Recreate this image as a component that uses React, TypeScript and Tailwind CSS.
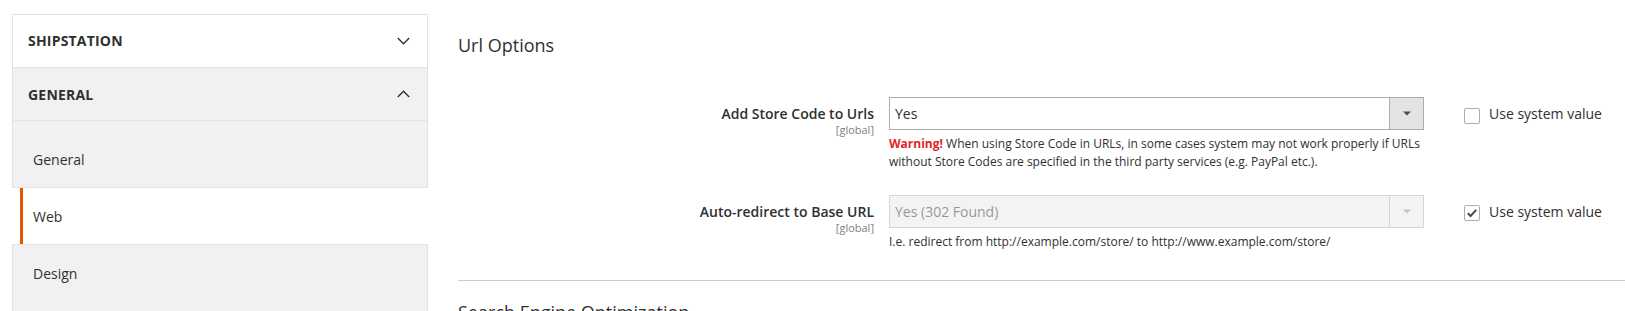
import React from "react";

function Chevron({ up }: { up?: boolean }) {
  return (
    <svg width="13" height="8" viewBox="0 0 13 8" fill="none">
      {up ? (
        <path d="M0.8 7L6.5 1.3L12.2 7" stroke="#303030" strokeWidth="1.4" />
      ) : (
        <path d="M0.8 1L6.5 6.7L12.2 1" stroke="#303030" strokeWidth="1.4" />
      )}
    </svg>
  );
}

function SelectBox({ value, disabled }: { value: string; disabled?: boolean }) {
  return (
    <div
      className={
        disabled
          ? "flex h-[33px] w-[535px] border border-[#adadad] bg-[#e9e9e9] opacity-50"
          : "flex h-[33px] w-[535px] border border-[#adadad] bg-white"
      }
    >
      <div className="flex flex-1 items-center pl-[5px] text-[14px] text-[#303030]">{value}</div>
      <div
        className={
          disabled
            ? "flex w-[34px] items-center justify-center border-l border-[#adadad] bg-[#e9e9e9]"
            : "flex w-[34px] items-center justify-center border-l border-[#adadad] bg-[#e3e3e3]"
        }
      >
        <svg width="8" height="5" viewBox="0 0 8 5">
          <path d="M0 0.5H8L4 4.5Z" fill={disabled ? "#8a8a8a" : "#514943"} />
        </svg>
      </div>
    </div>
  );
}

function CheckBox({ checked }: { checked?: boolean }) {
  return (
    <div className="flex h-[16px] w-[16px] items-center justify-center rounded-[2px] border border-[#adadad] bg-white">
      {checked && (
        <svg width="14" height="14" viewBox="0 0 14 14" fill="none">
          <path d="M2.8 7.2L5.6 10L11.2 3.8" stroke="#514943" strokeWidth="2" />
        </svg>
      )}
    </div>
  );
}

export default function App() {
  return (
    <div
      className="flex h-[311px] overflow-hidden bg-white pl-[12px] pt-[14px] text-[#303030]"
      style={{ fontFamily: '"Open Sans", "Liberation Sans", sans-serif' }}
    >
      {/* Sidebar */}
      <div className="w-[416px] shrink-0">
        <div className="flex h-[54px] items-center justify-between border border-[#e3e3e3] bg-white pb-[1px] pl-[15px] pr-[17px]">
          <span className="text-[14px] font-bold tracking-[0.2px]">SHIPSTATION</span>
          <Chevron />
        </div>
        <div className="flex h-[53px] items-center justify-between border-x border-b border-[#e3e3e3] bg-[#f1f1f1] pl-[15px] pr-[17px]">
          <span className="text-[14px] font-bold tracking-[0.2px]">GENERAL</span>
          <Chevron up />
        </div>
        <div className="border-x border-b border-[#e3e3e3] bg-[#f1f1f1] pt-[10px]">
          <div className="flex h-[56px] items-center pl-[20px] text-[14px]">General</div>
        </div>
        <div className="ml-[8px] flex h-[56px] items-center border-l-[3px] border-[#eb5202] bg-white pl-[10px] text-[14px]">
          Web
        </div>
        <div className="h-[80px] border-x border-t border-[#e3e3e3] bg-[#f1f1f1]">
          <div className="flex h-[56px] items-center pl-[20px] text-[14px]">Design</div>
        </div>
      </div>

      {/* Main */}
      <div className="ml-[30px] flex-1">
        <div className="mt-[19px] text-[18px] font-medium leading-[24px]">Url Options</div>

        {/* Row 1 */}
        <div className="mt-[40px] flex">
          <div className="w-[416px] shrink-0 pt-[8px] text-right">
            <div className="text-[14px] font-semibold leading-[18px]">Add Store Code to Urls</div>
            <div className="text-[11px] leading-[13px] text-[#808080]">[global]</div>
          </div>
          <div className="ml-[15px] w-[535px] shrink-0">
            <SelectBox value="Yes" />
            <div className="mt-[5px] whitespace-nowrap text-[12px] leading-[18px]">
              <span className="font-bold text-[#e22626]">Warning!</span> When using Store Code in URLs, in
              some cases system may not work properly if URLs
              <br />
              without Store Codes are specified in the third party services (e.g. PayPal etc.).
            </div>
          </div>
          <div className="ml-[40px] flex items-start">
            <div className="mt-[11px]">
              <CheckBox />
            </div>
            <div className="ml-[9px] mt-[8px] text-[14px] leading-[18px]">Use system value</div>
          </div>
        </div>

        {/* Row 2 */}
        <div className="mt-[24px] flex">
          <div className="w-[416px] shrink-0 pt-[8px] text-right">
            <div className="text-[14px] font-semibold leading-[18px]">Auto-redirect to Base URL</div>
            <div className="text-[11px] leading-[13px] text-[#808080]">[global]</div>
          </div>
          <div className="ml-[15px] w-[535px] shrink-0">
            <SelectBox value="Yes (302 Found)" disabled />
            <div className="mt-[5px] whitespace-nowrap text-[12px] leading-[18px]">
              I.e. redirect from http://example.com/store/ to http://www.example.com/store/
            </div>
          </div>
          <div className="ml-[40px] flex items-start">
            <div className="mt-[10px]">
              <CheckBox checked />
            </div>
            <div className="ml-[9px] mt-[8px] text-[14px] leading-[18px]">Use system value</div>
          </div>
        </div>

        <div className="mt-[29px] h-px bg-[#cccccc]" />
        <div className="mt-[19px] text-[18px] font-medium leading-[24px]">Search Engine Optimization</div>
      </div>
    </div>
  );
}
